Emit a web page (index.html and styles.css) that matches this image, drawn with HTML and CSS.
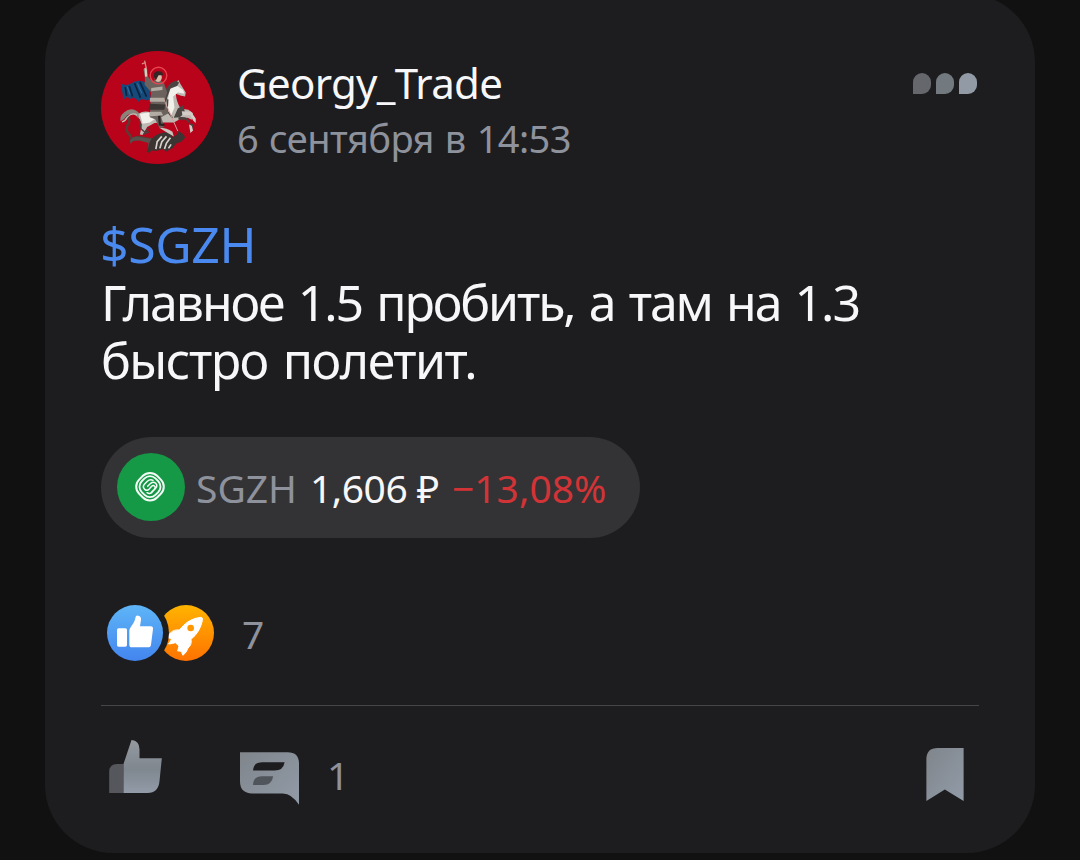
FILE: index.html
```html
<!DOCTYPE html>
<html lang="ru">
<head>
    <meta charset="utf-8">
    <title>Georgy_Trade</title>
    <meta name="viewport" content="width=device-width, initial-scale=1.0">
    <link rel="stylesheet" href="styles.css">
</head>
<body>
    <article class="card">
        <header class="post-header">
            <svg class="avatar" viewBox="33 33 340 340">
                <circle cx="203" cy="203" r="170" fill="#b9031b"/>
                <!-- cloak -->
                <path d="M93 131q16 8 30 0 16-12 34-7 14 4 20 18l6 34q-10 8-18 4-12-6-20 6-6-12-18-12-8 8-14-4-10 4-12 12z" fill="#164a7b"/>
                <path d="M106 142l4 26M118 138l10 32M134 130l18 44M150 126l20 44" stroke="#0c2440" stroke-width="5" fill="none"/>
                <path d="M112 140l8 24M142 130l14 30" stroke="#2d70a5" stroke-width="3" fill="none"/>
                <!-- dragon -->
                <path d="M106 226q18 10 10 24-12 18 0 32 12 10 6 22 10-14 28-12 22 4 36 6" fill="none" stroke="#5b3b35" stroke-width="7"/>
                <path d="M120 304q6-16 30-12l36 6 14 10-4 20-16 4-6-10 2-12-28-8-18 2-8 8z" fill="#57504c"/>
                <path d="M176 322q2-22 20-34 20-14 48-10l4 14 12-6 6-12 16 10 4 10-12 12-16 6-8 12-22 12-8-8-22 6-14-2-4 8-10-4z" fill="#3a3532"/>
                <path d="M198 328l4-22 14-16M210 326l6-20 14-16M224 328l6-18 12-16M236 326l8-12" stroke="#d8d4cd" stroke-width="5" fill="none"/>
                <path d="M208 264q24 0 40 12l4 14-18-10q-12-8-26-16z" fill="#c8c3bd"/>
                <!-- horse -->
                <path d="M148 220q-22-22-46-2-14 12-10 26 12-4 18-16 18-14 36 8z" fill="#8b827a"/>
                <path d="M96 246q10-2 16-14 14-16 30-6" fill="none" stroke="#c4beb7" stroke-width="4"/>
                <path d="M146 222q16-12 38-4l32 2 6-32 4-34q12-18 32-26l8-8 6 12 16 26-2 12-12-2-16-6q2 24 14 44l24 4 14 10-4 20-12-6-20 2-22 12-32 0-26 2-22 12-14 24-8-2 6-30-10-22z" fill="#bdb8b2"/>
                <path d="M150 222l26-4 24 16-20 14-22 4zM240 148l20-12 20 14 4 12-20-4-14 12 4 34-10 22-14-22z" fill="#f2f0eb"/>
                <path d="M224 160q8-28 34-38l10 6-6 10-20 8-10 28-6 34-6 2zM264 206l16-10 6 22-16 14-18 2z" fill="#4a4542"/>
                <path d="M234 178l-2 36 16 20M148 238l6 30 14 12 10-4M176 264l-14 20" stroke="#49413e" stroke-width="4" fill="none"/>
                <path d="M266 232q20-2 28 4l10 18 8-2-6 22-8-6 2-16-12-12-22 0z" fill="#49413e"/>
                <path d="M276 214l28 2 14 20 0 14-8-8-8-16-24 0M298 254l4 26 8-8-4-14" fill="#d2cdc7"/>
                <!-- rider -->
                <path d="M160 88q8 26 4 46l20 24-4 74 16 6 14 28 14-4-10-30 22-12-12-36 8-26-10-30-18-10-18 6-12-14-2-22z" fill="#6b625d"/>
                <path d="M180 174h44v12h-44zM184 144l34-4v10l-34 4zM180 216l34 0 6 10-42 4z" fill="#b3aca5"/>
                <path d="M180 192l46 2-2 16-48 0z" fill="#3b3533"/>
                <path d="M208 228l2 26 14 2" fill="none" stroke="#292526" stroke-width="7"/>
                <circle cx="206" cy="107" r="25" fill="none" stroke="#e9444f" stroke-width="4"/>
                <ellipse cx="205" cy="112" rx="11" ry="14" fill="#d9bfa9"/>
                <path d="M192 112q-2-20 14-18 14 0 14 12l-14 0-8 16z" fill="#352626"/>
                <path d="M167 84l2 26" stroke="#dccbbb" stroke-width="7"/>
                <path d="M164 62l6 26M156 72l12-4" stroke="#d28c80" stroke-width="4"/>
                <path d="M222 178l42 96" stroke="#d5a09a" stroke-width="3"/>
            </svg>
            <div class="author">
                <div class="author-name">Georgy_Trade</div>
                <div class="post-date">6 сентября в 14:53</div>
            </div>
            <div class="menu">
                <span class="dot dot-dark"></span>
                <span class="dot dot-mid"></span>
                <span class="dot"></span>
            </div>
        </header>

        <div class="post-text">
            <div class="ticker">$SGZH</div>
            <div class="line-first">Главное 1.5 пробить, а там на 1.3</div>
            <div class="line-last">быстро полетит.</div>
        </div>

        <div class="quote">
            <svg class="quote-logo" viewBox="81 83 204 204">
                <circle cx="183" cy="185" r="102" fill="#159947"/>
                <g fill="none" stroke="#f2fbf5" stroke-linecap="round">
                    <rect x="142" y="146" width="76" height="76" rx="30" transform="rotate(45 180 184)" stroke-width="6"/>
                    <rect x="151" y="155" width="58" height="58" rx="23" transform="rotate(45 180 184)" stroke-width="5.5"/>
                    <path d="M189 165q-9-5-17 3l-8 8q-8 8 0 16 7 6 13 0l8-9q5-5 9 0 4 4-1 9l-9 9M173 183l9-9q8-7 15 0 7 8 0 15l-11 12q-7 6-15 1" stroke-width="4.5"/>
                </g>
            </svg>
            <span class="quote-name">SGZH</span>
            <span class="quote-price">1,606 ₽</span>
            <span class="quote-change">−13,08%</span>
        </div>

        <div class="reactions">
            <svg class="reaction-icons" viewBox="36 44 321 168">
                <defs>
                    <linearGradient id="blue" x1="0" y1="0" x2="0" y2="1">
                        <stop offset="0" stop-color="#5eb5f7"/>
                        <stop offset="1" stop-color="#4385ef"/>
                    </linearGradient>
                    <linearGradient id="orange" x1="0" y1="0" x2="0" y2="1">
                        <stop offset="0" stop-color="#ffb400"/>
                        <stop offset="1" stop-color="#ff7200"/>
                    </linearGradient>
                    <mask id="cutout">
                        <rect x="30" y="30" width="340" height="200" fill="#fff"/>
                        <circle cx="120" cy="128" r="102" fill="#000"/>
                    </mask>
                </defs>
                <circle cx="120" cy="128" r="84" fill="url(#blue)"/>
                <rect x="66" y="114" width="30" height="55" rx="5" fill="#fff"/>
                <path d="M103 121q0-5 4-10l9-14q4-6 5-14 1-9 9-7 9 2 8 12l-3 20h32q8 0 7 8l-6 47q-1 8-9 8h-48q-8 0-8-8z" fill="#fff"/>
                <g mask="url(#cutout)">
                    <circle cx="273" cy="128" r="84" fill="url(#orange)"/>
                    <path d="M318 81q-31 3-52 24l-13 14q-16-2-26 8l-11 14q8 2 14 6l-9 14q12-1 20-4l11 10-4 15q8-1 12 2 0 5 4 11 12-10 15-22 12-9 9-26 27-22 34-56 2-10-4-10z" fill="#fff" stroke="#fff" stroke-width="3" stroke-linejoin="round"/>
                    <circle cx="287" cy="113" r="10" fill="#ff9700"/>
                </g>
            </svg>
            <span class="count">7</span>
        </div>

        <footer class="actions">
            <svg class="like-icon" viewBox="44 44 158 159">
                <defs>
                    <linearGradient id="silver" x1="0" y1="0" x2="1" y2="1">
                        <stop offset="0" stop-color="#80858b"/>
                        <stop offset="1" stop-color="#919ba8"/>
                    </linearGradient>
                    <linearGradient id="steel" x1="0" y1="0" x2="0" y2="1">
                        <stop offset="0" stop-color="#94999f"/>
                        <stop offset=".55" stop-color="#7f878f"/>
                        <stop offset="1" stop-color="#929ba8"/>
                    </linearGradient>
                </defs>
                <path d="M87 116H68q-24 0-24 24v63h43z" fill="#55575c"/>
                <path d="M87 203V116L111 44q24 2 24 28v27h67l-7 68q-3 36-36 36z" fill="url(#steel)"/>
            </svg>
            <svg class="comment-icon" viewBox="435 83 176 157">
                <path d="M435 83h142q34 0 34 34v123q-22-34-48-34h-92q-36 0-36-36z" fill="url(#silver)"/>
                <path d="M474 138q1-25 27-25h67q-4 25-30 25z" fill="#1d1d1f"/>
                <path d="M474 181q0-26 28-26h32q-4 26-29 26z" fill="#50545b"/>
            </svg>
            <span class="count comment-count">1</span>
            <svg class="bookmark-icon" viewBox="50 40 111 158">
                <path d="M50 74q0-34 34-34h77v158l-56-34-55 34z" fill="url(#silver)"/>
            </svg>
        </footer>
    </article>
</body>
</html>
```
FILE: styles.css
```css
* {
    box-sizing: border-box;
}
body {
    margin: 0;
    height: 860px;
    overflow: hidden;
    background: #111111;
    font-family: "Noto Sans", "Open Sans", sans-serif;
}
svg {
    display: block;
    flex-shrink: 0;
}
.card {
    width: 990px;
    height: 859px;
    margin: -6px auto 0;
    padding: 57px 56px 0;
    border-radius: 68px;
    background: #1d1d1f;
}
.post-header {
    display: flex;
    height: 113px;
}
.avatar {
    width: 113px;
    height: 113px;
}
.author {
    margin: 4px 0 0 23px;
    white-space: nowrap;
}
.author-name {
    color: #f7f7f9;
    font-size: 42px;
    line-height: 55px;
    letter-spacing: -0.68px;
}
.post-date {
    color: #8e929c;
    font-size: 38px;
    line-height: 56px;
    letter-spacing: -0.6px;
    word-spacing: 1.7px;
}
.menu {
    display: flex;
    gap: 5px;
    margin: 22px 2px 0 auto;
}
.dot {
    width: 18px;
    height: 21px;
    border-radius: 9px 9px 9px 0;
    background: #929aa6;
}
.dot-dark {
    background: #65676d;
}
.dot-mid {
    background: #727a80;
}
.post-text {
    margin-top: 51px;
    color: #f7f7f9;
    font-size: 50px;
    line-height: 58px;
    white-space: nowrap;
}
.ticker {
    margin-left: -1px;
    color: #4a8af0;
    letter-spacing: -0.4px;
}
.line-first {
    letter-spacing: -2.1px;
    word-spacing: 3.3px;
}
.line-last {
    letter-spacing: -1.5px;
    word-spacing: 3.5px;
}
.quote {
    display: flex;
    align-items: center;
    width: 539px;
    height: 101px;
    margin-top: 48px;
    padding-left: 16px;
    border-radius: 51px;
    background: #333335;
    font-size: 39px;
    white-space: nowrap;
}
.quote-logo {
    width: 68px;
    height: 68px;
    margin: -2px 11px 0 0;
}
.quote-name {
    width: 114px;
    color: #8e929c;
}
.quote-price {
    width: 142px;
    color: #f7f7f9;
    letter-spacing: -0.5px;
}
.quote-change {
    color: #d23336;
}
.reactions {
    display: flex;
    align-items: center;
    height: 56px;
    margin: 67px 0 0 6px;
}
.reaction-icons {
    width: 107px;
    height: 56px;
    margin-right: 28px;
}
.count {
    padding-top: 2px;
    color: #8e929c;
    font-size: 39px;
    line-height: 56px;
}
.actions {
    display: flex;
    align-items: flex-start;
    margin-top: 44px;
    padding: 34px 15px 0 8px;
    border-top: 1px solid #46464a;
}
.like-icon {
    width: 53px;
    height: 53px;
}
.comment-icon {
    width: 59px;
    height: 53px;
    margin: 12px 28px 0 78px;
}
.comment-count {
    padding-top: 7px;
}
.bookmark-icon {
    width: 38px;
    height: 53px;
    margin: 8px 0 0 auto;
}
```
